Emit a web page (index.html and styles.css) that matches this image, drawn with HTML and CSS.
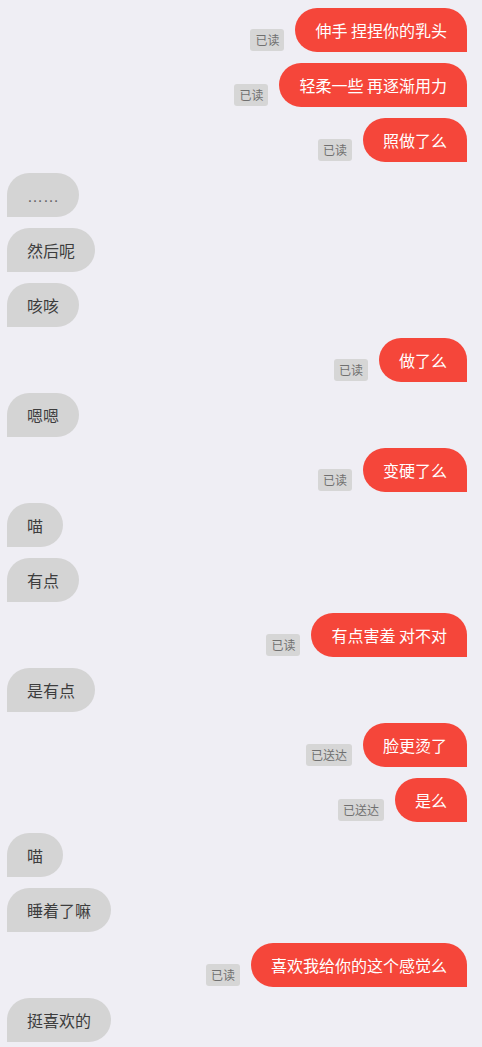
FILE: index.html
```html
<!DOCTYPE html>
<html lang="zh-CN">
<head>
<meta charset="utf-8">
<title>聊天</title>
<link rel="stylesheet" href="styles.css">
</head>
<body>
<div class="chat">
  <div class="row me"><span class="status">已读</span><div class="bubble">伸手 捏捏你的乳头</div></div>
  <div class="row me"><span class="status">已读</span><div class="bubble">轻柔一些 再逐渐用力</div></div>
  <div class="row me"><span class="status">已读</span><div class="bubble">照做了么</div></div>
  <div class="row other"><div class="bubble"><span class="ellipsis">……</span></div></div>
  <div class="row other"><div class="bubble">然后呢</div></div>
  <div class="row other"><div class="bubble">咳咳</div></div>
  <div class="row me"><span class="status">已读</span><div class="bubble">做了么</div></div>
  <div class="row other"><div class="bubble">嗯嗯</div></div>
  <div class="row me"><span class="status">已读</span><div class="bubble">变硬了么</div></div>
  <div class="row other"><div class="bubble">喵</div></div>
  <div class="row other"><div class="bubble">有点</div></div>
  <div class="row me"><span class="status">已读</span><div class="bubble">有点害羞 对不对</div></div>
  <div class="row other"><div class="bubble">是有点</div></div>
  <div class="row me"><span class="status">已送达</span><div class="bubble">脸更烫了</div></div>
  <div class="row me"><span class="status">已送达</span><div class="bubble">是么</div></div>
  <div class="row other"><div class="bubble">喵</div></div>
  <div class="row other"><div class="bubble">睡着了嘛</div></div>
  <div class="row me"><span class="status">已读</span><div class="bubble">喜欢我给你的这个感觉么</div></div>
  <div class="row other"><div class="bubble">挺喜欢的</div></div>
</div>
</body>
</html>
```
FILE: styles.css
```css
html, body {
  margin: 0;
  padding: 0;
  background: #efeef4;
}
body {
  font-family: "Noto Sans CJK SC", "Microsoft YaHei", "Noto Sans", sans-serif;
}
.chat {
  display: flex;
  flex-direction: column;
  gap: 11px;
  padding: 8px 15px 8px 7px;
}
.row {
  display: flex;
  align-items: flex-end;
  gap: 11px;
}
.row.me {
  justify-content: flex-end;
}
.row.other {
  justify-content: flex-start;
}
.bubble {
  height: 44px;
  line-height: 44px;
  padding: 0 20px;
  font-size: 16px;
  white-space: nowrap;
}
.me .bubble {
  background: #f5463a;
  color: #ffffff;
  border-radius: 22px 22px 0 22px;
}
.other .bubble {
  background: #d4d4d4;
  color: #3d3d3d;
  border-radius: 22px 22px 22px 0;
}
.ellipsis {
  font-family: "Liberation Sans", Arial, sans-serif;
  color: #666666;
}
.status {
  display: inline-block;
  height: 22px;
  line-height: 22px;
  padding: 0 5px;
  margin-bottom: 1px;
  font-size: 12px;
  color: #707070;
  background: #d6d6d6;
  border-radius: 3px;
}
```
